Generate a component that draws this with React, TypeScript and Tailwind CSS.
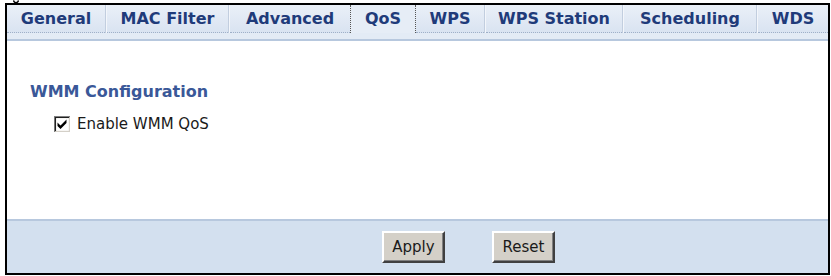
import { Fragment, useState } from "react";

const tabs = [
  { label: "General", w: "w-[98px]" },
  { label: "MAC Filter", w: "w-[121px]" },
  { label: "Advanced", w: "w-[120px]" },
  { label: "QoS", w: "w-[66px]" },
  { label: "WPS", w: "w-[68px]" },
  { label: "WPS Station", w: "w-[136px]" },
  { label: "Scheduling", w: "w-[132px]" },
  { label: "WDS", w: "flex-1" },
];

function CheckBox({ checked, onToggle }: { checked: boolean; onToggle: () => void }) {
  return (
    <button onClick={onToggle} className="w-[16px] h-[16px] shrink-0 cursor-pointer">
      <svg width="16" height="16" viewBox="0 0 16 16">
        <rect x="0" y="0" width="16" height="16" fill="#d4d0c8" />
        <path d="M0.5 16V0.5h15.5" fill="none" stroke="#808080" strokeWidth="1.5" />
        <path d="M1.5 15V1.5h13.5" fill="none" stroke="#202020" strokeWidth="1.2" />
        <rect x="2.2" y="2.2" width="12.6" height="12.6" fill="#ffffff" />
        {checked && (
          <path d="M3.5 6.5l3 3 6-6v3.5l-6 6-3-3z" fill="#000" />
        )}
      </svg>
    </button>
  );
}

function WinButton({ children }: { children: string }) {
  return (
    <button className="w-[63px] h-[32px] bg-[#d4d0c8] border-2 border-t-white border-l-white border-r-[#404040] border-b-[#404040] shadow-[inset_-1px_-1px_0_#808080] text-[15px] text-[#1a1a1a] [font-family:'DejaVu_Sans',sans-serif] cursor-pointer">
      {children}
    </button>
  );
}

export default function App() {
  const [active, setActive] = useState("QoS");
  const [wmm, setWmm] = useState(true);

  return (
    <div className="w-[831px] h-[276px] bg-white [font-family:'DejaVu_Sans',sans-serif] overflow-hidden">
      {/* sliver of the caption above the frame */}
      <div className="h-[3px] pl-[13px]">
        <svg width="6" height="3" viewBox="0 0 6 3">
          <path d="M0.5 0.5Q1 2.6 3 2.6T5.5 0.5" fill="none" stroke="#000" strokeWidth="1.4" />
        </svg>
      </div>

      <div className="ml-[5px] w-[825px] h-[272px] border-2 border-black flex flex-col">
        {/* Tabs */}
        <div className="flex h-[28px] bg-gradient-to-b from-[#eaf0f8] to-[#d9e3f1]">
          {tabs.map((t, i) => {
            const sel = t.label === active;
            const prevSel = i > 0 && tabs[i - 1].label === active;
            return (
              <Fragment key={t.label}>
                {i > 0 && !sel && !prevSel && (
                  <div className="w-[2px] h-full bg-[#c2cedf] border-r border-r-[#f3f6fb]" />
                )}
                <div
                  onClick={() => setActive(t.label)}
                  className={`${t.w} h-full flex items-center justify-center text-[16px] font-bold text-[#1f3b7a] cursor-pointer ${
                    sel
                      ? "border-x border-dotted border-x-[#555] bg-[#e6edf6]"
                      : "border-b border-dotted border-b-[#9fb0c8]"
                  }`}
                >
                  {t.label}
                </div>
              </Fragment>
            );
          })}
        </div>
        <div className="h-[8px] bg-[#e3ebf5] border-b-2 border-b-[#b7c8de]" />

        {/* Content */}
        <div className="flex-1 bg-white pt-[42px] pl-[23px]">
          <div className="text-[16px] font-bold text-[#3a5898] leading-[18px]">WMM Configuration</div>
          <div className="mt-[14px] ml-[24px] flex items-center gap-[7px]">
            <CheckBox checked={wmm} onToggle={() => setWmm(!wmm)} />
            <span className="text-[15px] text-[#1a1a1a] leading-[18px]">Enable WMM QoS</span>
          </div>
        </div>

        {/* Footer */}
        <div className="h-[54px] bg-[#d3e0ef] border-t-2 border-t-[#b7c8de] flex items-center pl-[375px] gap-[47px]">
          <WinButton>Apply</WinButton>
          <WinButton>Reset</WinButton>
        </div>
      </div>
    </div>
  );
}
